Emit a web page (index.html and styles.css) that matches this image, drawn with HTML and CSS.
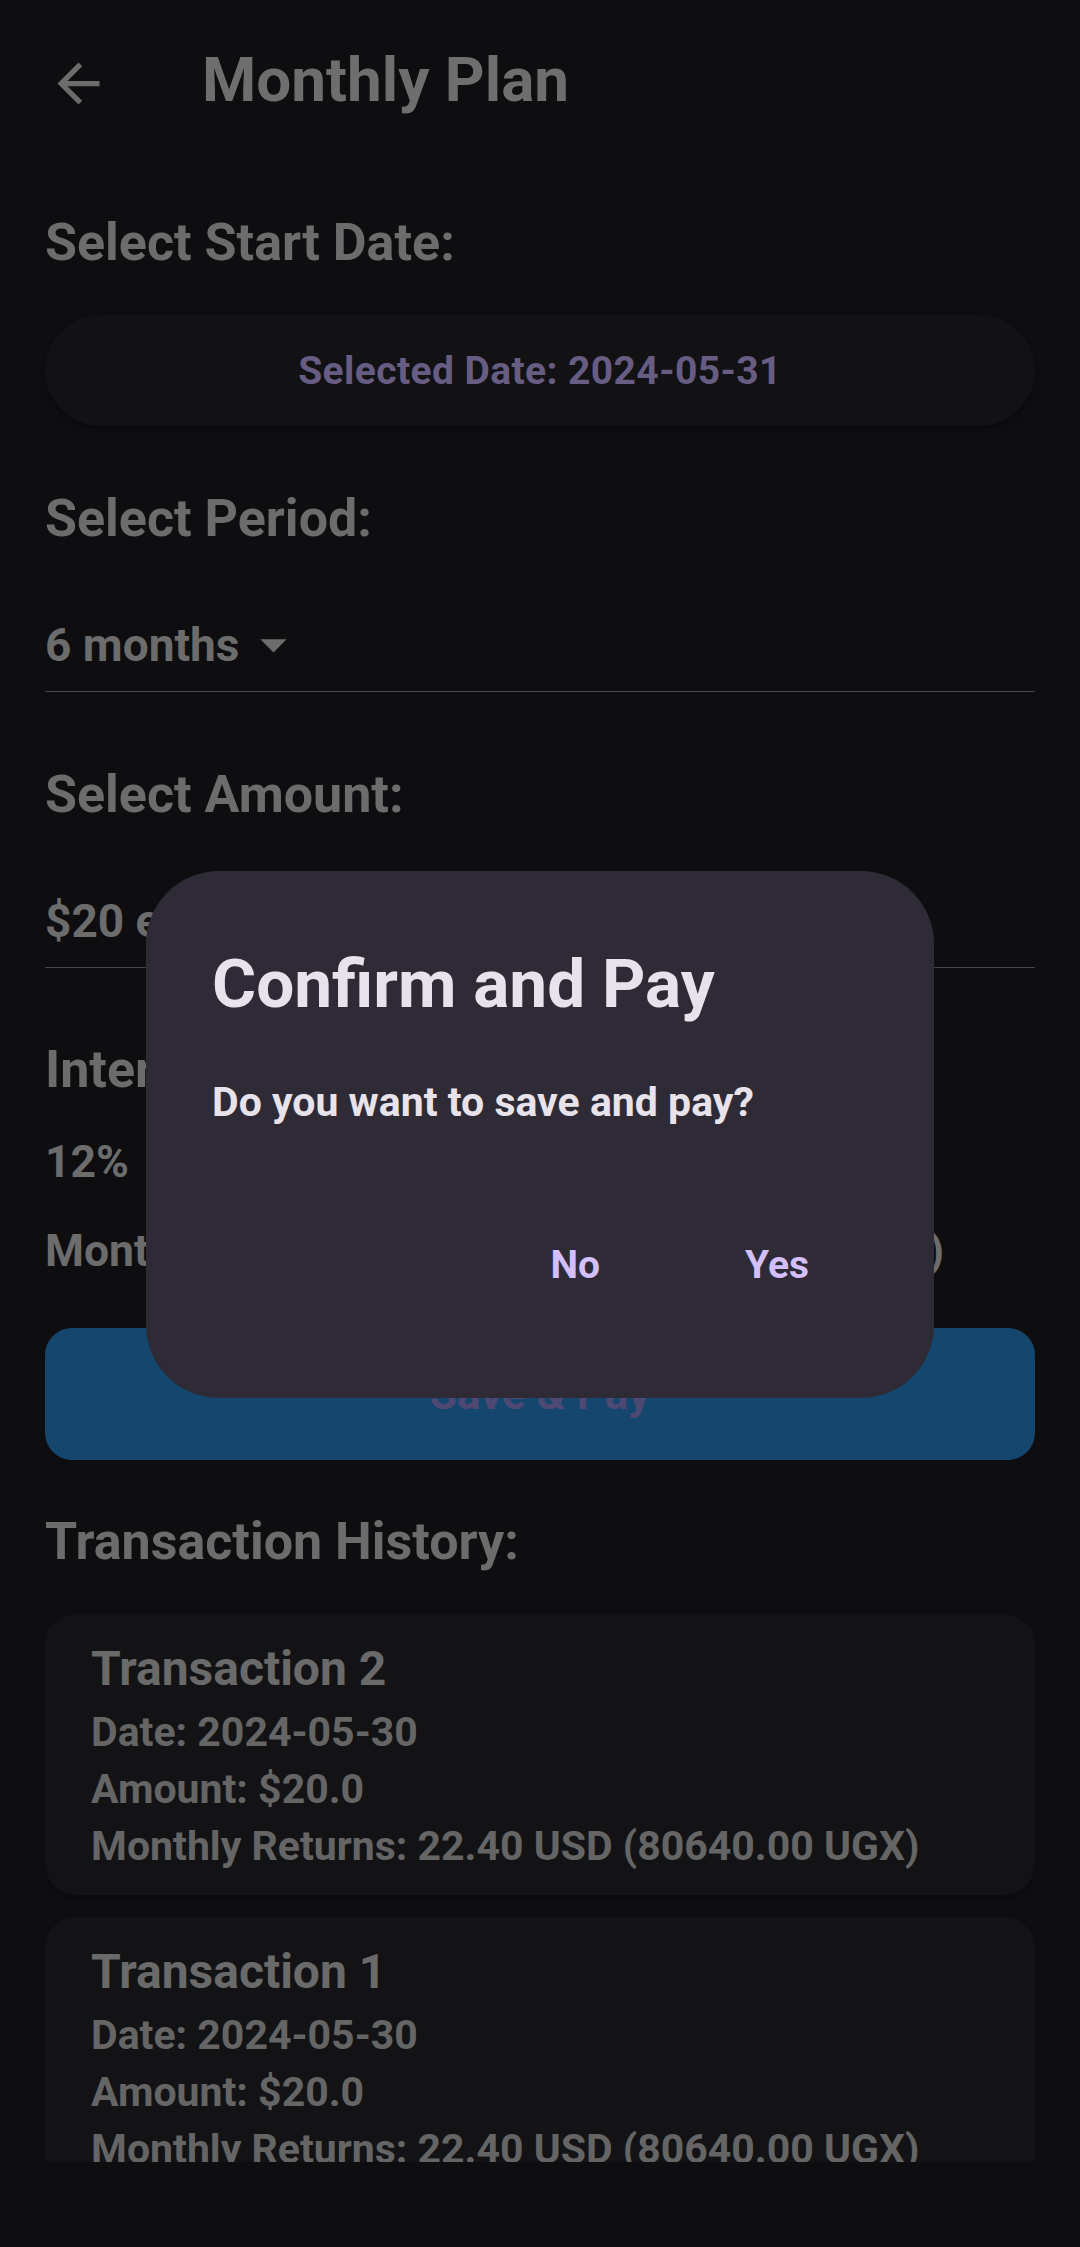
FILE: index.html
```html
<!DOCTYPE html>
<html>
<head>
<meta charset="utf-8">
<link rel="stylesheet" href="styles.css">
</head>
<body>
<div class="screen">
  <header class="appbar">
    <svg class="back" viewBox="0 0 24 24"><path d="M20 11H7.83l5.59-5.59L12 4l-8 8 8 8 1.41-1.41L7.83 13H20v-2z"/></svg>
    <h1 class="title">Monthly Plan</h1>
  </header>
  <main class="content">
    <h2 class="label l-start">Select Start Date:</h2>
    <div class="pill"><span class="pill-text">Selected Date: 2024-05-31</span></div>

    <h2 class="label l-period">Select Period:</h2>
    <div class="dropdown d-period">
      <span class="dd-text">6 months</span>
      <svg class="dd-icon" viewBox="0 0 24 24"><path d="M7 10l5 5 5-5z"/></svg>
    </div>

    <h2 class="label l-amount">Select Amount:</h2>
    <div class="dropdown d-amount">
      <span class="dd-text">$20 every month</span>
      <svg class="dd-icon" viewBox="0 0 24 24"><path d="M7 10l5 5 5-5z"/></svg>
    </div>

    <h2 class="label l-interest">Interest Rate:</h2>
    <p class="info i-rate">12%</p>
    <p class="info i-returns">Monthly Returns: 22.40 USD (80640.00 UGX)</p>

    <button class="save">Save &amp; Pay</button>

    <h2 class="label l-history">Transaction History:</h2>
    <div class="history">
      <div class="card">
        <div class="card-title">Transaction 2</div>
        <div class="card-line">Date: 2024-05-30</div>
        <div class="card-line">Amount: $20.0</div>
        <div class="card-line">Monthly Returns: 22.40 USD (80640.00 UGX)</div>
      </div>
      <div class="card">
        <div class="card-title">Transaction 1</div>
        <div class="card-line">Date: 2024-05-30</div>
        <div class="card-line">Amount: $20.0</div>
        <div class="card-line">Monthly Returns: 22.40 USD (80640.00 UGX)</div>
      </div>
    </div>
  </main>
</div>

<div class="dialog" role="dialog">
  <h3 class="dlg-title">Confirm and Pay</h3>
  <p class="dlg-text">Do you want to save and pay?</p>
  <div class="dlg-actions">
    <button class="dlg-btn">No</button>
    <button class="dlg-btn">Yes</button>
  </div>
</div>
</body>
</html>
```

FILE: styles.css
```css
* { box-sizing: border-box; }

html, body {
  margin: 0;
  padding: 0;
}

body {
  width: 1080px;
  height: 2247px;
  overflow: hidden;
  background: #0e0e11;
  font-family: "Roboto", "Noto Sans", sans-serif;
  position: relative;
}

.screen {
  width: 1080px;
}

/* App bar */
.appbar {
  height: 167px;
  display: flex;
  align-items: flex-start;
  padding-left: 47px;
}

.back {
  width: 63px;
  height: 63px;
  margin-top: 52px;
  fill: #6c6c6c;
  flex: none;
}

.title {
  margin: 49px 0 0 92px;
  font-size: 62px;
  line-height: 62px;
  font-weight: 700;
  color: #6e6e6e;
  white-space: nowrap;
}

/* Content */
.content {
  padding: 0 45px;
}

.label {
  margin: 0;
  font-size: 52px;
  line-height: 60px;
  font-weight: 700;
  color: #6c6c6c;
  white-space: nowrap;
}

.l-start { margin-top: 46px; }
.l-period { margin-top: 63px; }
.l-amount { margin-top: 73px; }
.l-interest { margin-top: 72px; }
.l-history { margin-top: 52px; }

.pill {
  margin-top: 42px;
  height: 111px;
  border-radius: 56px;
  background: #121215;
  box-shadow: 0 3px 5px rgba(0, 0, 0, 0.35);
  display: flex;
  align-items: center;
  justify-content: center;
}

.pill-text {
  font-size: 39px;
  line-height: 50px;
  font-weight: 700;
  color: #675d83;
  letter-spacing: 0.4px;
}

.dropdown {
  margin-top: 64px;
  height: 79px;
  padding-bottom: 15px;
  border-bottom: 1px solid #48484b;
  display: flex;
  align-items: center;
}

.dd-text {
  font-size: 46px;
  line-height: 60px;
  font-weight: 700;
  color: #6c6c6c;
  white-space: nowrap;
}

.dd-icon {
  width: 63px;
  height: 63px;
  fill: #6c6c6c;
  margin-left: 3px;
  flex: none;
}

.info {
  margin: 0;
  font-size: 44.5px;
  line-height: 60px;
  font-weight: 700;
  color: #6c6c6c;
  white-space: nowrap;
}

.i-rate { margin-top: 32px; }
.i-returns { margin-top: 29px; }

.save {
  display: block;
  width: 100%;
  margin-top: 47px;
  height: 132px;
  border: none;
  border-radius: 27px;
  background: #15466e;
  color: #4e4973;
  font-family: "Roboto", sans-serif;
  font-size: 44px;
  font-weight: 700;
  padding: 0;
}

/* History */
.history {
  margin-top: 42px;
  height: 548px;
  overflow: hidden;
  display: flex;
  flex-direction: column;
  gap: 22px;
}

.card {
  flex: none;
  background: #131316;
  border-radius: 31px;
  padding: 25px 46px 20px;
  box-shadow: 0 2px 4px rgba(0, 0, 0, 0.3);
}

.card-title {
  font-size: 48px;
  line-height: 60px;
  font-weight: 700;
  color: #6a6a6a;
  margin-bottom: 5px;
}

.card-line {
  font-size: 41px;
  line-height: 57px;
  font-weight: 700;
  color: #656565;
  white-space: nowrap;
}

/* Dialog overlay */
.dialog {
  position: absolute;
  left: 146px;
  top: 871px;
  width: 788px;
  height: 527px;
  border-radius: 73px;
  background: #2e2b36;
  padding: 75px 66px 0 66px;
}

.dlg-title {
  margin: 0;
  font-size: 67.5px;
  line-height: 76px;
  font-weight: 700;
  color: #e8e3ea;
  white-space: nowrap;
}

.dlg-text {
  margin: 52px 0 0;
  font-size: 41px;
  line-height: 56px;
  font-weight: 700;
  color: #e8e3ea;
  white-space: nowrap;
}

.dlg-actions {
  margin-top: 82px;
  margin-right: 28px;
  display: flex;
  justify-content: flex-end;
  gap: 83px;
}

.dlg-btn {
  height: 105px;
  padding: 0 31px;
  border: none;
  background: transparent;
  color: #d2bffc;
  font-family: "Roboto", sans-serif;
  font-size: 39px;
  font-weight: 700;
}
```
